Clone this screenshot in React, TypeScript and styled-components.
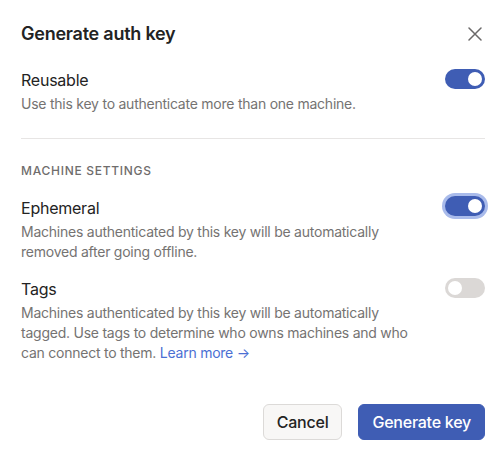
import React, { useState } from "react";
import styled, { createGlobalStyle } from "styled-components";

const GlobalStyle = createGlobalStyle`
   html, body {
      margin: 0;
      padding: 0;
      background: #ffffff;
   }
   body {
      font-family: Inter, "Noto Sans", "Liberation Sans", sans-serif;
      color: #232323;
      letter-spacing: -0.015em;
      -webkit-font-smoothing: antialiased;
   }
`;

const Dialog = styled.div`
   box-sizing: border-box;
   width: 504px;
   height: 459px;
   padding: 20px 19px 19px 21px;
   display: flex;
   flex-direction: column;
   background: #ffffff;
`;

const Header = styled.div`
   display: flex;
   align-items: center;
   justify-content: space-between;
   height: 28px;
   margin-bottom: 20px;
`;

const Title = styled.h2`
   margin: 0;
   font-size: 18px;
   line-height: 28px;
   font-weight: 600;
   color: #232323;
`;

const CloseButton = styled.button`
   display: flex;
   align-items: center;
   justify-content: center;
   width: 24px;
   height: 24px;
   margin-right: -2px;
   padding: 0;
   border: none;
   background: transparent;
   color: #6b6969;
   cursor: pointer;
`;

const Setting = styled.div<{ $gap?: number }>`
   display: flex;
   align-items: flex-start;
   justify-content: space-between;
   margin-top: ${({ $gap }) => $gap ?? 0}px;
`;

const SettingText = styled.div`
   max-width: 400px;
`;

const Label = styled.div`
   font-size: 16px;
   line-height: 24px;
   font-weight: 400;
   color: #232323;
`;

const Description = styled.p`
   margin: 2px 0 0;
   font-size: 14px;
   line-height: 20px;
   color: #757372;
`;

const LearnMore = styled.a`
   color: #4b6fd3;
   text-decoration: none;
`;

const Divider = styled.hr`
   margin: 24px 0 24px;
   border: none;
   border-top: 1px solid #e7e5e4;
   height: 0;
`;

const SectionTitle = styled.div`
   font-size: 12px;
   line-height: 16px;
   font-weight: 500;
   letter-spacing: 0.06em;
   text-transform: uppercase;
   color: #6f6d6c;
   margin-bottom: 17px;
`;

const Toggle = styled.button<{ $on: boolean; $focused?: boolean }>`
   position: relative;
   flex-shrink: 0;
   width: 40px;
   height: 20px;
   margin-top: ${({ $focused }) => ($focused ? "0" : "1px")};
   padding: 0;
   border: none;
   border-radius: 10px;
   background: ${({ $on }) => ($on ? "#3f5db4" : "#dbd8d6")};
   box-shadow: ${({ $focused }) => ($focused ? "0 0 0 3px #a9bbeb" : "none")};
   cursor: pointer;

   &::after {
      content: "";
      position: absolute;
      top: 3px;
      left: ${({ $on }) => ($on ? "23px" : "3px")};
      width: 14px;
      height: 14px;
      border-radius: 50%;
      background: #ffffff;
   }
`;

const Footer = styled.div`
   margin-top: auto;
   display: flex;
   justify-content: flex-end;
   gap: 16px;
`;

const Button = styled.button<{ $primary?: boolean }>`
   height: 36px;
   padding: 0 13px;
   border-radius: 6px;
   font-family: inherit;
   font-size: 16px;
   font-weight: 500;
   letter-spacing: -0.015em;
   border: 1px solid ${({ $primary }) => ($primary ? "#3f5db4" : "#dcdad8")};
   background: ${({ $primary }) => ($primary ? "#3f5db4" : "#f8f7f6")};
   color: ${({ $primary }) => ($primary ? "#ffffff" : "#232323")};
   cursor: pointer;
`;

function CloseIcon() {
   return (
      <svg width="14" height="14" viewBox="0 0 14 14" fill="none">
         <path d="M1 1L13 13M13 1L1 13" stroke="currentColor" strokeWidth="1.5" strokeLinecap="round" />
      </svg>
   );
}

export default function App() {
   const [reusable, setReusable] = useState(true);
   const [ephemeral, setEphemeral] = useState(true);
   const [tags, setTags] = useState(false);

   return (
      <>
         <GlobalStyle />
         <Dialog>
            <Header>
               <Title>Generate auth key</Title>
               <CloseButton aria-label="Close">
                  <CloseIcon />
               </CloseButton>
            </Header>

            <Setting>
               <SettingText>
                  <Label>Reusable</Label>
                  <Description>Use this key to authenticate more than one machine.</Description>
               </SettingText>
               <Toggle $on={reusable} onClick={() => setReusable(!reusable)} />
            </Setting>

            <Divider />

            <SectionTitle>Machine settings</SectionTitle>

            <Setting>
               <SettingText>
                  <Label>Ephemeral</Label>
                  <Description>
                     Machines authenticated by this key will be automatically removed after going offline.
                  </Description>
               </SettingText>
               <Toggle $on={ephemeral} $focused onClick={() => setEphemeral(!ephemeral)} />
            </Setting>

            <Setting $gap={15}>
               <SettingText>
                  <Label>Tags</Label>
                  <Description>
                     Machines authenticated by this key will be automatically tagged. Use tags to determine who
                     owns machines and who can connect to them. <LearnMore href="#">Learn more →</LearnMore>
                  </Description>
               </SettingText>
               <Toggle $on={tags} onClick={() => setTags(!tags)} />
            </Setting>

            <Footer>
               <Button>Cancel</Button>
               <Button $primary>Generate key</Button>
            </Footer>
         </Dialog>
      </>
   );
}
